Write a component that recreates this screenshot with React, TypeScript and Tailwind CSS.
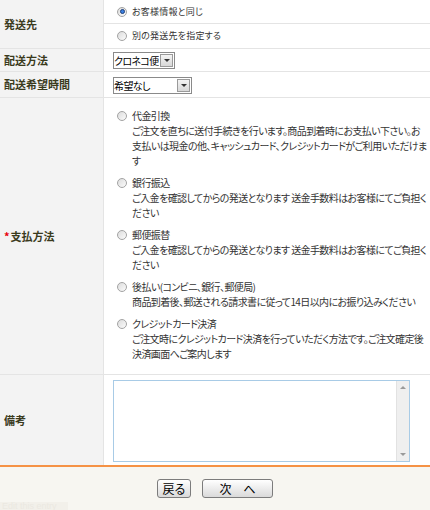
import React from "react";

const jp = "font-['Noto_Sans_CJK_JP','Noto_Sans',sans-serif]";

function Radio({ checked = false }: { checked?: boolean }) {
  return (
    <span className="relative inline-block w-[10px] h-[10px] shrink-0 rounded-full border border-[#a3a3a3] bg-gradient-to-br from-[#dcdcdc] to-[#fbfbfb]">
      {checked && <span className="absolute inset-[1.5px] rounded-full border border-[#1d3f7a] bg-[#3a7fe0]" />}
    </span>
  );
}

function Label({ children, required }: { children: React.ReactNode; required?: boolean }) {
  return (
    <div className="w-[104px] shrink-0 bg-[#f3f3f3] border-r border-[#e4e4e4] flex items-center pl-[4px] text-[11px] font-bold text-[#3a3a1c]">
      {required && <span className="text-[#e8000b] mr-[1px]">*</span>}
      {children}
    </div>
  );
}

function FakeSelect({ value, width }: { value: string; width: string }) {
  return (
    <div className={`${width} h-[17px] flex items-stretch border border-[#8a8a8a] bg-white`}>
      <span className="flex-1 text-[10px] tracking-[-0.6px] leading-[15px] text-black whitespace-nowrap overflow-hidden">{value}</span>
      <span className="w-[13px] m-[1px] border border-[#9a9a9a] bg-gradient-to-b from-[#f4f4f4] to-[#d8d8d8] flex items-center justify-center">
        <span className="w-0 h-0 border-l-[3px] border-r-[3px] border-t-[3px] border-l-transparent border-r-transparent border-t-[#333]" />
      </span>
    </div>
  );
}

const payments = [
  {
    title: "代金引換",
    lines: [
      "ご注文を直ちに送付手続きを行います。商品到着時にお支払い下さい。お",
      "支払いは現金の他、キャッシュカード、クレジットカードがご利用いただけま",
      "す",
    ],
  },
  {
    title: "銀行振込",
    lines: ["ご入金を確認してからの発送となります 送金手数料はお客様にてご負担く", "ださい"],
  },
  {
    title: "郵便振替",
    lines: ["ご入金を確認してからの発送となります 送金手数料はお客様にてご負担く", "ださい"],
  },
  {
    title: "後払い(コンビニ、銀行、郵便局)",
    lines: ["商品到着後、郵送される請求書に従って14日以内にお振り込みください"],
  },
  {
    title: "クレジットカード決済",
    lines: ["ご注文時にクレジットカード決済を行っていただく方法です。ご注文確定後", "決済画面へご案内します"],
  },
];

export default function App() {
  return (
    <div className={`w-[430px] h-[510px] overflow-hidden bg-white text-[#333] ${jp} [font-feature-settings:'palt']`}>
      <div className="flex border-b border-[#e4e4e4] h-[49px]">
        <Label>発送先</Label>
        <div className="flex-1 flex flex-col">
          <div className="h-[24px] flex items-center gap-[5px] pl-[13px] border-b border-[#e4e4e4] text-[9px] tracking-[0.2px]">
            <Radio checked />
            <span>お客様情報と同じ</span>
          </div>
          <div className="flex-1 flex items-center gap-[5px] pl-[13px] text-[9px] tracking-[0.2px]">
            <Radio />
            <span>別の発送先を指定する</span>
          </div>
        </div>
      </div>

      <div className="flex border-b border-[#e4e4e4] h-[23px]">
        <Label>配送方法</Label>
        <div className="flex-1 flex items-center pl-[9px]">
          <FakeSelect value="クロネコ便" width="w-[62px]" />
        </div>
      </div>

      <div className="flex border-b border-[#e4e4e4] h-[26px]">
        <Label>配送希望時間</Label>
        <div className="flex-1 flex items-center pl-[9px] pt-[1px]">
          <FakeSelect value="希望なし" width="w-[79px]" />
        </div>
      </div>

      <div className="flex border-b border-[#e4e4e4] h-[277px]">
        <Label required>支払方法</Label>
        <div className="flex-1 flex flex-col gap-[7px] pt-[10px] pl-[13px] text-[10px] tracking-[-0.6px] leading-[15px]">
          {payments.map((p) => (
            <div key={p.title} className="flex flex-col">
              <div className="flex items-center gap-[5px]">
                <Radio />
                <span className="whitespace-nowrap">{p.title}</span>
              </div>
              {p.lines.map((l, i) => (
                <div key={i} className="pl-[15px] whitespace-nowrap">
                  {l}
                </div>
              ))}
            </div>
          ))}
        </div>
      </div>

      <div className="flex h-[90px]">
        <Label>備考</Label>
        <div className="flex-1 pl-[9px] pt-[5px]">
          <div className="w-[297px] h-[82px] border border-[#a8cbe6] flex bg-white">
            <div className="flex-1" />
            <div className="w-[13px] bg-[#efefef] border-l border-[#e2e2e2] flex flex-col items-center justify-between py-[5px]">
              <span className="w-0 h-0 border-l-[3px] border-r-[3px] border-b-[3px] border-l-transparent border-r-transparent border-b-[#9a9a9a]" />
              <span className="w-0 h-0 border-l-[3px] border-r-[3px] border-t-[3px] border-l-transparent border-r-transparent border-t-[#9a9a9a]" />
            </div>
          </div>
        </div>
      </div>

      <div className="h-[2px] bg-[#f59245]" />

      <div className="bg-[#f7f6f1] h-[43px] flex flex-col">
        <div className="flex justify-center gap-[11px] pt-[12px]">
          <button className="w-[34px] h-[19px] rounded-[3px] border border-[#7c7c7c] bg-gradient-to-b from-white to-[#dadada] text-[12px] leading-[17px] text-black">
            戻る
          </button>
          <button className="w-[71px] h-[19px] rounded-[3px] border border-[#7c7c7c] bg-gradient-to-b from-white to-[#dadada] text-[12px] leading-[17px] text-black">
            次　へ
          </button>
        </div>
        <div className="mt-auto w-[68px] bg-[#f2f0ea] text-[9px] leading-[8px] text-[#ebe8e1] pl-[2px] font-['Liberation_Sans',sans-serif]">
          Edit this entry
        </div>
      </div>
    </div>
  );
}
